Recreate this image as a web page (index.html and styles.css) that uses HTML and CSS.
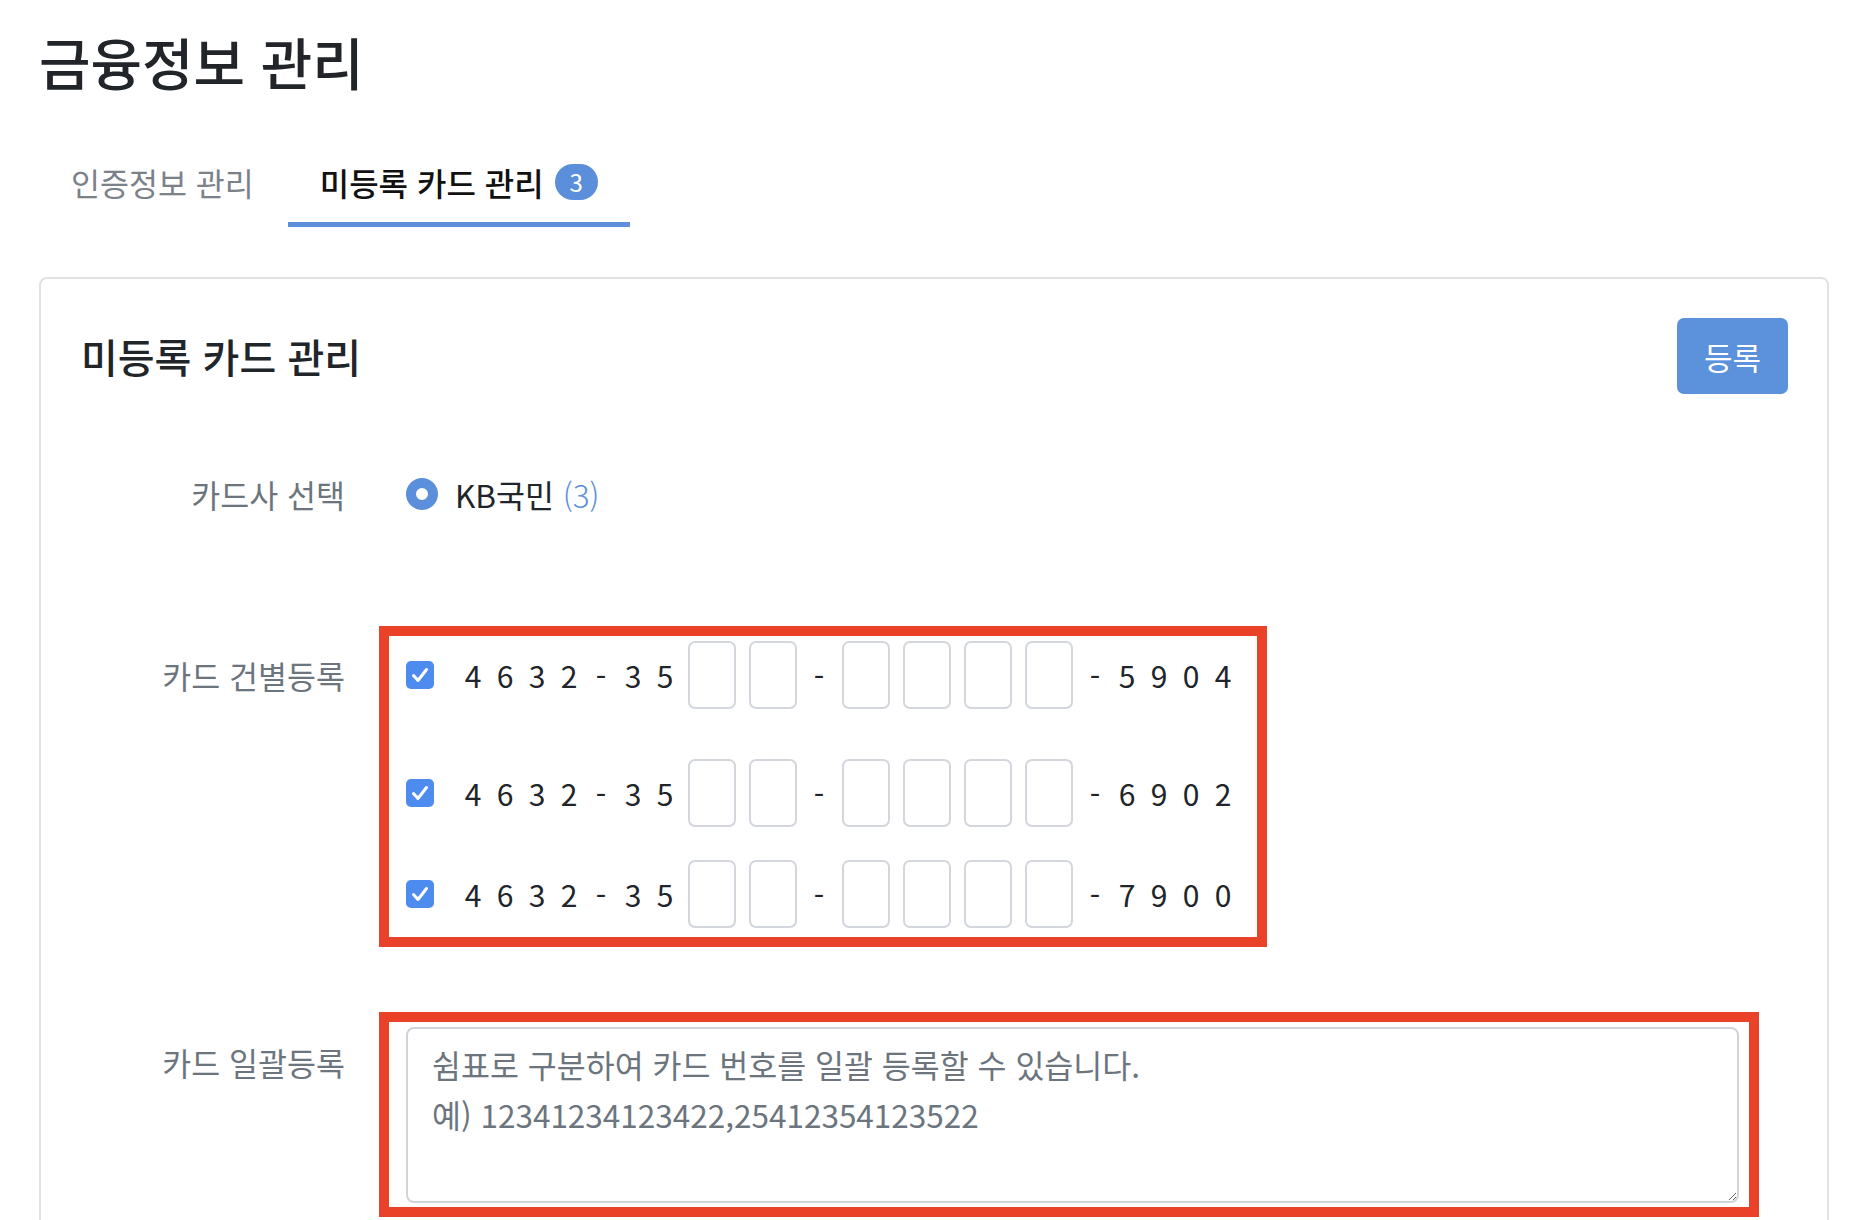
FILE: index.html
```html
<!DOCTYPE html>
<html lang="ko">
<head>
	<meta charset="UTF-8">
	<title>금융정보 관리 - 미등록 카드 관리</title>
	<link rel="stylesheet" href="styles.css">
</head>
<body>
	<div id="wrapper">
		<h1 class="page-title">금융정보 관리</h1>

		<ul class="tabs">
			<li class="tab">인증정보 관리</li>
			<li class="tab active">미등록 카드 관리<span class="badge">3</span></li>
		</ul>

		<div class="card">
			<div class="card-head">
				<h2>미등록 카드 관리</h2>
				<button class="btn-primary">등록</button>
			</div>

			<div class="field field-company">
				<div class="field-label">카드사 선택</div>
				<div class="field-body">
					<label class="radio"><span class="radio-dot"></span>KB국민 <span class="count">(3)</span></label>
				</div>
			</div>

			<div class="field field-single">
				<div class="field-label">카드 건별등록</div>
				<div class="field-body">
					<div class="mark mark-single">
						<div class="card-row row-1">
							<svg class="check" width="28" height="28" viewBox="0 0 28 28"><rect width="28" height="28" rx="5" fill="#4e8bef"/><polyline points="7.5,14.5 12,19.5 20.5,8.5" fill="none" stroke="#fff" stroke-width="3" stroke-linecap="round" stroke-linejoin="round"/></svg>
							<span class="num">4</span><span class="num">6</span><span class="num">3</span><span class="num">2</span><span class="num">-</span><span class="num">3</span><span class="num">5</span>
							<input class="digit" type="text" maxlength="1"><input class="digit" type="text" maxlength="1">
							<span class="num">-</span>
							<input class="digit" type="text" maxlength="1"><input class="digit" type="text" maxlength="1"><input class="digit" type="text" maxlength="1"><input class="digit" type="text" maxlength="1">
							<span class="num">-</span><span class="num">5</span><span class="num">9</span><span class="num">0</span><span class="num">4</span>
						</div>
						<div class="card-row row-2">
							<svg class="check" width="28" height="28" viewBox="0 0 28 28"><rect width="28" height="28" rx="5" fill="#4e8bef"/><polyline points="7.5,14.5 12,19.5 20.5,8.5" fill="none" stroke="#fff" stroke-width="3" stroke-linecap="round" stroke-linejoin="round"/></svg>
							<span class="num">4</span><span class="num">6</span><span class="num">3</span><span class="num">2</span><span class="num">-</span><span class="num">3</span><span class="num">5</span>
							<input class="digit" type="text" maxlength="1"><input class="digit" type="text" maxlength="1">
							<span class="num">-</span>
							<input class="digit" type="text" maxlength="1"><input class="digit" type="text" maxlength="1"><input class="digit" type="text" maxlength="1"><input class="digit" type="text" maxlength="1">
							<span class="num">-</span><span class="num">6</span><span class="num">9</span><span class="num">0</span><span class="num">2</span>
						</div>
						<div class="card-row row-3">
							<svg class="check" width="28" height="28" viewBox="0 0 28 28"><rect width="28" height="28" rx="5" fill="#4e8bef"/><polyline points="7.5,14.5 12,19.5 20.5,8.5" fill="none" stroke="#fff" stroke-width="3" stroke-linecap="round" stroke-linejoin="round"/></svg>
							<span class="num">4</span><span class="num">6</span><span class="num">3</span><span class="num">2</span><span class="num">-</span><span class="num">3</span><span class="num">5</span>
							<input class="digit" type="text" maxlength="1"><input class="digit" type="text" maxlength="1">
							<span class="num">-</span>
							<input class="digit" type="text" maxlength="1"><input class="digit" type="text" maxlength="1"><input class="digit" type="text" maxlength="1"><input class="digit" type="text" maxlength="1">
							<span class="num">-</span><span class="num">7</span><span class="num">9</span><span class="num">0</span><span class="num">0</span>
						</div>
					</div>
				</div>
			</div>

			<div class="field field-bulk">
				<div class="field-label">카드 일괄등록</div>
				<div class="field-body">
					<div class="mark mark-bulk">
						<textarea class="bulk-input" placeholder="쉼표로 구분하여 카드 번호를 일괄 등록할 수 있습니다.&#10;예) 12341234123422,25412354123522"></textarea>
					</div>
				</div>
			</div>
		</div>
	</div>
</body>
</html>
```

FILE: styles.css
```css
body {
	margin: 0;
	background-color: #fff;
	font-family: "Noto Sans CJK KR", "Noto Sans", sans-serif;
	color: #212529;
}
#wrapper {
	padding: 0 31px 0 39px;
}
.page-title {
	margin: 30px 0 0;
	font-size: 56px;
	line-height: 62px;
	font-weight: 500;
	color: #212529;
}

/* tabs */
.tabs {
	display: flex;
	gap: 2px;
	list-style: none;
	margin: 68px 0 0;
	padding: 0;
}
.tab {
	display: flex;
	align-items: center;
	padding: 0 32px 18px;
	font-size: 31.5px;
	line-height: 44px;
	color: #7b8189;
	border-bottom: 5px solid transparent;
}
.tab.active {
	color: #111;
	font-weight: 500;
	font-size: 32px;
	border-bottom-color: #5b8fdc;
}
.badge {
	display: inline-flex;
	align-items: center;
	justify-content: center;
	width: 43px;
	height: 36px;
	margin-left: 11px;
	border-radius: 18px;
	background-color: #5b8fdc;
	color: #fff;
	font-size: 24px;
	font-weight: 400;
	line-height: 1;
}

/* card */
.card {
	margin-top: 50px;
	border: 2px solid #e2e2e2;
	border-radius: 8px;
	padding: 39px 39px 60px 40px;
}
.card-head {
	display: flex;
	align-items: center;
	justify-content: space-between;
}
.card-head h2 {
	margin: 0;
	font-size: 40px;
	font-weight: 500;
	line-height: 50px;
}
.btn-primary {
	width: 111px;
	height: 76px;
	border: 0;
	border-radius: 7px;
	background-color: #5c91dc;
	color: #fff;
	font-family: inherit;
	font-size: 31px;
}

.field {
	display: grid;
	grid-template-columns: 264px 1fr;
	column-gap: 34px;
}
.field-label {
	text-align: right;
	font-size: 31.5px;
	line-height: 44px;
	color: #6c757d;
}
.field-company {
	margin-top: 78px;
}
.field-single {
	margin-top: 110px;
}
.field-single .field-label {
	padding-top: 27px;
}
.field-bulk {
	margin-top: 65px;
}
.field-bulk .field-label {
	padding-top: 28px;
}

.radio {
	display: flex;
	align-items: center;
	padding-left: 27px;
	font-size: 31.5px;
	line-height: 44px;
	color: #212529;
	white-space: pre;
}
.radio-dot {
	width: 32px;
	height: 32px;
	margin-right: 17px;
	border-radius: 50%;
	box-sizing: border-box;
	border: 10.5px solid #5b8fdc;
	background-color: #fff;
}
.count {
	color: #5b8fdc;
	font-weight: 300;
}

/* red highlight boxes */
.mark {
	border: 10px solid #ea4129;
}
.mark-single {
	display: inline-block;
	padding: 5px 18px 9px 17px;
}
.mark-bulk {
	margin-right: 29px;
	padding: 5px 10px 4px 17px;
}

.card-row {
	display: flex;
	align-items: center;
	height: 68px;
}
.row-1 {
	margin-bottom: 50px;
}
.row-2 {
	margin-bottom: 33px;
}
.check {
	display: block;
	margin-right: 23px;
}
.num {
	width: 32px;
	text-align: center;
	font-size: 30px;
	line-height: 44px;
	color: #212529;
}
.digit {
	box-sizing: border-box;
	width: 48px;
	height: 68px;
	margin: 0 6.5px;
	padding: 0;
	border: 2px solid #d3d7dd;
	border-radius: 7px;
	text-align: center;
	font-family: inherit;
	font-size: 30px;
}

.bulk-input {
	display: block;
	box-sizing: border-box;
	width: 100%;
	height: 176px;
	padding: 10px 24px;
	border: 2px solid #d0d4da;
	border-radius: 8px;
	font-family: inherit;
	font-size: 31.5px;
	line-height: 50px;
	color: #212529;
}
.bulk-input::placeholder {
	color: #6c757d;
}
```
